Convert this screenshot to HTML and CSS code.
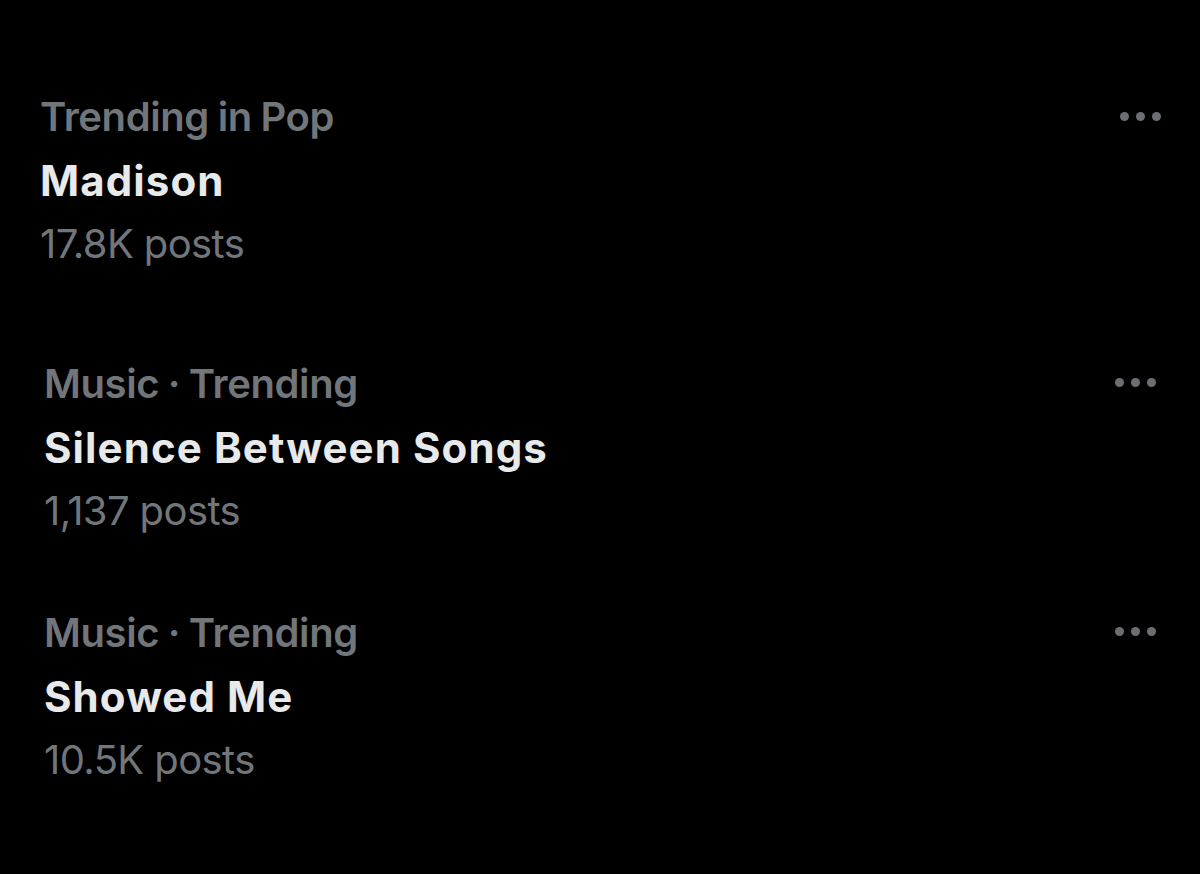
FILE: index.html
```html
<!DOCTYPE html>
<html>
<head>
<meta charset="utf-8">
<link rel="stylesheet" href="styles.css">
</head>
<body>
<main class="trends">
  <section class="trend trend-first">
    <div class="trend-text">
      <div class="meta">Trending in Pop</div>
      <div class="title">Madison</div>
      <div class="count">17.8K posts</div>
    </div>
    <div class="more"><span></span><span></span><span></span></div>
  </section>
  <section class="trend trend-second">
    <div class="trend-text">
      <div class="meta">Music · Trending</div>
      <div class="title">Silence Between Songs</div>
      <div class="count">1,137 posts</div>
    </div>
    <div class="more"><span></span><span></span><span></span></div>
  </section>
  <section class="trend trend-third">
    <div class="trend-text">
      <div class="meta">Music · Trending</div>
      <div class="title">Showed Me</div>
      <div class="count">10.5K posts</div>
    </div>
    <div class="more"><span></span><span></span><span></span></div>
  </section>
</main>
</body>
</html>
```

FILE: styles.css
```css
html, body {
  margin: 0;
  padding: 0;
  background: #000;
  height: 100%;
}
body {
  font-family: Inter, "Noto Sans", sans-serif;
  -webkit-font-smoothing: antialiased;
}
.trends {
  display: flex;
  flex-direction: column;
  padding: 84px 0 0 0;
}
.trend {
  display: flex;
  justify-content: space-between;
  align-items: flex-start;
}
.trend-first {
  padding: 0 39px 0 40px;
}
.trend-second {
  margin-top: 76px;
  padding: 0 44px 0 44px;
}
.trend-third {
  margin-top: 58px;
  padding: 0 44px 0 44px;
}
.trend-text {
  display: flex;
  flex-direction: column;
}
.meta {
  color: #71767b;
  font-size: 40px;
  font-weight: 600;
  line-height: 65px;
  letter-spacing: -0.4px;
  word-spacing: -1px;
}
.title {
  color: #e7e9ea;
  font-size: 42px;
  font-weight: 700;
  line-height: 64px;
  letter-spacing: 1.1px;
}
.count {
  color: #71767b;
  font-size: 40px;
  font-weight: 400;
  line-height: 62px;
  letter-spacing: -0.6px;
}
.more {
  display: flex;
  gap: 7px;
  margin-top: 28px;
}
.trend-second .more,
.trend-third .more {
  margin-top: 27px;
}
.more span {
  width: 9px;
  height: 9px;
  border-radius: 50%;
  background: #6b6e72;
}
```
